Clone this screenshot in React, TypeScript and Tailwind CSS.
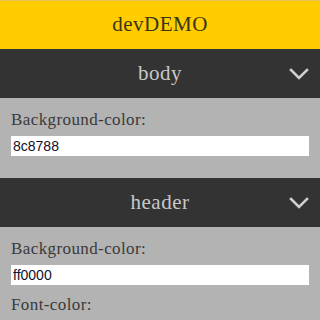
import * as React from 'react';

const slab = { fontFamily: '"Liberation Serif", "DejaVu Serif", serif' };

const Chevron = () => (
  <svg width="20" height="12" viewBox="0 0 20 12" fill="none" stroke="#d0d0d0" strokeWidth="2.6" strokeLinecap="square">
    <path d="M2 2l8 8 8-8" />
  </svg>
);

function SectionBar({ title }: { title: string }) {
  return (
    <div className="relative flex h-[49px] items-center justify-center bg-[#333333]">
      <span className="text-[21px] tracking-[0.5px] text-[#c8c8c8]" style={slab}>{title}</span>
      <div className="absolute right-[11px] top-[19px]">
        <Chevron />
      </div>
    </div>
  );
}

function Field({ label, value }: { label: string; value?: string }) {
  return (
    <div className="flex flex-col">
      <label className="text-[17px] leading-[20px] tracking-[0.4px] text-[#3a3a3a]" style={slab}>{label}</label>
      {value !== undefined && (
        <input
          readOnly
          value={value}
          className="mt-[6px] h-[20px] w-full bg-white px-[2px] text-[14px] text-[#10102a] outline-none"
          style={{ fontFamily: '"Liberation Sans", Arial, sans-serif' }}
        />
      )}
    </div>
  );
}

export default function App() {
  return (
    <div className="h-[320px] w-[320px] overflow-hidden bg-[#b3b3b3]">
      <div className="flex h-[49px] items-center justify-center border-t border-[#e6c35a] bg-[#ffcc00]">
        <span className="text-[21px] tracking-[0.5px] text-[#3a3418]" style={slab}>devDEMO</span>
      </div>

      <SectionBar title="body" />
      <div className="flex h-[80px] flex-col px-[11px] pt-[12px]">
        <Field label="Background-color:" value="8c8788" />
      </div>

      <SectionBar title="header" />
      <div className="flex flex-col gap-[10px] px-[11px] pt-[12px]">
        <Field label="Background-color:" value="ff0000" />
        <Field label="Font-color:" />
      </div>
    </div>
  );
}
